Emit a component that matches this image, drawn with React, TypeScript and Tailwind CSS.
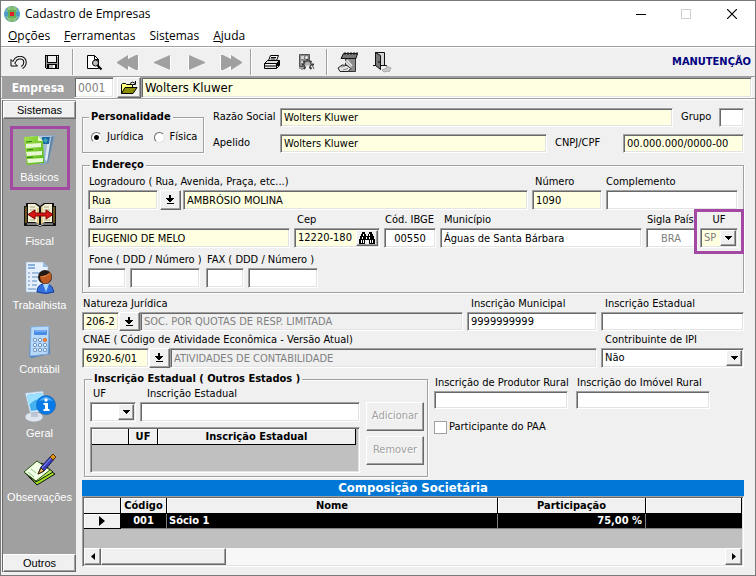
import React from 'react';

const sunken =
  'border border-t-[#a0a0a0] border-l-[#a0a0a0] border-b-white border-r-white shadow-[inset_1px_1px_0_#696969,inset_-1px_-1px_0_#e3e3e3]';
const raised =
  'bg-[#f0f0f0] border border-t-white border-l-white border-b-[#696969] border-r-[#696969] shadow-[inset_-1px_-1px_0_#a0a0a0]';
const etched = 'border border-[#a0a0a0] shadow-[1px_1px_0_#fff,inset_1px_1px_0_#fff]';

interface TextBoxProps {
  id: string;
  value?: string;
  className?: string;
  disabled?: boolean;
}

const TextBox = ({ id, value = '', className = 'bg-white', disabled }: TextBoxProps) => (
  <input
    id={id}
    type="text"
    defaultValue={value}
    disabled={disabled}
    aria-label={id}
    className={`min-w-0 rounded-none px-[3px] outline-none ${sunken} ${className}`}
  />
);

interface FieldProps {
  id: string;
  label: string;
  className?: string;
  labelClass?: string;
  children: React.ReactNode;
}

const Field = ({ id, label, className = '', labelClass = 'pl-px', children }: FieldProps) => (
  <div className={`flex min-w-0 flex-col ${className}`}>
    <label htmlFor={id} className={`h-4 leading-4 whitespace-nowrap ${labelClass}`}>{label}</label>
    <div className="flex">{children}</div>
  </div>
);

const PickButton = ({ label, className = '' }: { label: string; className?: string }) => (
  <button type="button" aria-label={label} className={`flex w-[21px] shrink-0 items-center justify-center ${raised} ${className}`}>
    <svg width="9" height="10" viewBox="0 0 9 10" shapeRendering="crispEdges">
      <path d="M3 0h2v3h3v1h-1v1h-1v1h-1v1h-2v-1h-1v-1h-1v-1h-1v-1h3zM1 8h7v1h-7z" fill="#000" />
    </svg>
  </button>
);

interface ComboProps {
  id: string;
  options: string[];
  className?: string;
  disabled?: boolean;
}

const Combo = ({ id, options, className = 'bg-white', disabled }: ComboProps) => (
  <div className={`relative flex h-5 ${sunken} ${className}`}>
    <select id={id} disabled={disabled} className="w-full min-w-0 appearance-none bg-transparent pr-4 pl-[3px] opacity-100 outline-none">
      {options.map(o => <option key={o}>{o}</option>)}
    </select>
    <span className={`pointer-events-none absolute top-px right-px bottom-px flex w-4 items-center justify-center ${raised}`}>
      <svg width="7" height="4" viewBox="0 0 7 4" shapeRendering="crispEdges">
        <path d="M0 0h7v1h-1v1h-1v1h-1v1h-1v-1h-1v-1h-1v-1h-1z" fill="#000" />
      </svg>
    </span>
  </div>
);

// Toolbar icons
const UndoIcon = () => (
  <svg width="17" height="13" viewBox="0 0 17 13" fill="none">
    <path d="M4 7q1-5 6-5.500 5 .5 5 5 0 3-3 5" stroke="#000" strokeWidth="3.400" />
    <path d="M4 7q1-5 6-5.500 5 .5 5 5 0 3-3 5" stroke="#f4f4f4" strokeWidth="1.400" />
    <path d="M1 3.500V10h6.500z" fill="#f4f4f4" stroke="#000" />
    <path d="M3 7l2-2" stroke="#f4f4f4" strokeWidth="1.500" />
  </svg>
);

const SaveIcon = () => (
  <svg width="14" height="14" viewBox="0 0 14 14" shapeRendering="crispEdges">
    <path d="M0 0h14v14H1v-1H0z" fill="#000" />
    <path d="M1 1h1v12H1zM12 2h1v11h-1z" fill="#9a9a9a" />
    <path d="M3 1h8v6H3z" fill="#f0f0f0" />
    <path d="M12 1h1v1h-1z" fill="#fff" />
    <path d="M2 8h10v1H2z" fill="#9a9a9a" />
    <path d="M4 10h6v3H4z" fill="#b8b8b8" />
    <path d="M8 10h2v3H8z" fill="#fff" />
  </svg>
);

const PreviewIcon = () => (
  <svg width="17" height="17" viewBox="0 0 17 17">
    <path d="M1.500 1.500h7l4 4v9h-11z" fill="#fff" stroke="#000" />
    <path d="M8.500 1.500v4h4" fill="none" stroke="#000" />
    <circle cx="9.500" cy="9" r="3" fill="#c0c0c0" stroke="#000" />
    <path d="M11.500 11.500l4 4" stroke="#000" strokeWidth="2" />
  </svg>
);

const ArrowIcon = ({ double, flip }: { double?: boolean; flip?: boolean }) => (
  <svg width={double ? 23 : 17} height="17" viewBox={double ? '0 0 23 17' : '0 0 17 17'} className={flip ? '-scale-x-100' : ''}>
    {double ? (
      <>
        <path d="M12 2v3l6-3h4v15l-6-4-3-1v4L1 9z" fill="#fff" />
        <path d="M11 1v4l8-4h2v15h-2l-8-4v4L0 9V8z" fill="#a0a0a0" />
      </>
    ) : (
      <>
        <path d="M17 2v15L1 10V9z" fill="#fff" />
        <path d="M16 1v15L0 9V8z" fill="#a0a0a0" />
      </>
    )}
  </svg>
);

const PrinterIcon = () => (
  <svg width="17" height="16" viewBox="0 0 17 16" stroke="#000">
    <path d="M4.500 6.500l2-5h8l-2 5z" fill="#fff" />
    <path d="M7 3.500h5M6.500 5h5" fill="none" />
    <path d="M.5 9.500l3-3h12v5l-3 3h-12z" fill="#ddd" />
    <path d="M.5 9.500h12v5M12.500 9.500l3-3M1 12h11" fill="none" />
    <path d="M2 10.500h9" stroke="#fff" />
    <path d="M14 8v4" strokeWidth="2" />
  </svg>
);

const GearIcon = () => (
  <svg width="17" height="18" viewBox="0 0 17 18">
    <path d="M1.500 1.500h10v12h-10z" fill="#8a8a8a" stroke="#555" />
    <path d="M3 3h3v3H3zM3 8h2v2H3z" fill="#d5d5d5" />
    <path d="M7 3h3v3H7z" fill="#fff" stroke="#444" strokeWidth=".5" />
    <path d="M9.500 6v11M4 11.500h12M5.500 8l8 8M13.500 8l-8 8" stroke="#3a3a3a" strokeWidth="2" />
    <circle cx="9.500" cy="11.500" r="3.500" fill="#b0b0b0" stroke="#444" />
    <path d="M8 12.500h3v5H8z" fill="#f0f0f0" />
    <path d="M2 13v3M4 13v4M14 12l2 4" stroke="#555" />
  </svg>
);

const NotepadIcon = () => (
  <svg width="22" height="21" viewBox="0 0 22 21">
    <path d="M8.500 5.500h10v14h-10z" fill="#8c8c8c" stroke="#333" />
    <path d="M6.500 1.500h14l-1.500 5H4z" fill="#777" stroke="#111" />
    <path d="M8 0v3M11 0v3M14 0v3M17 0v3M20 0v3" stroke="#222" />
    <path d="M10 8l5 6M8 9l6 7" stroke="#e8e8e8" strokeWidth="1.500" />
    <path d="M1 16l4-3 5 .5 4 3-3 3H3z" fill="#e4e4e4" stroke="#222" />
    <path d="M4 15l4-1M6 18l5-1.500" stroke="#888" />
  </svg>
);

const DoorIcon = () => (
  <svg width="20" height="22" viewBox="0 0 20 22">
    <path d="M3.500 1.500h9v13h-9z" fill="#d5d5d5" stroke="#111" />
    <path d="M3.500 1.500l5 3v14l-5-4z" fill="#777" stroke="#111" />
    <path d="M1 14.500h3M12 14.500h3" stroke="#111" />
    <path d="M7 10v2" stroke="#000" />
    <path d="M10 19l5-2-1-2 5 2-2 4-1-1-4 1z" fill="#ccc" stroke="#aaa" />
  </svg>
);

const FolderIcon = () => (
  <svg width="17" height="14" viewBox="0 0 17 14">
    <path d="M.5 12.500v-9l1-1h3l1 1h6v3" fill="#ffff7a" stroke="#000" />
    <path d="M.5 12.500l3.500-6h12l-4 6z" fill="#8c8c00" stroke="#000" />
    <path d="M9 2.500q3-3 5 0M14.500 0v3.500H12" fill="none" stroke="#000" />
  </svg>
);

const BinocularsIcon = () => (
  <svg width="16" height="13" viewBox="0 0 16 13" shapeRendering="crispEdges">
    <path d="M3 0h3v2h1v2h2V2h1V0h3v2h1v2h1v3h1v5h-6V8H6v4H0V7h1V4h1V2h1z" fill="#000" />
    <path d="M4 2h1v2H4zM3 5h1v2H3zM2 8h1v3H2zM4 8h1v3H4zM10 2h1v2h-1zM10 5h1v2h-1zM11 8h1v3h-1zM13 8h1v3h-1zM7 5h1v2H7z" fill="#fff" />
  </svg>
);

// Sidebar icons
const BasicosIcon = () => (
  <svg width="32" height="32" viewBox="0 0 32 32">
    <defs>
      <linearGradient id="folha" x1="0" y1="0" x2="1" y2="1">
        <stop offset="0" stopColor="#a5e34d" />
        <stop offset="1" stopColor="#4fb512" />
      </linearGradient>
      <linearGradient id="vidro" x1="0" y1="0" x2="1" y2="1">
        <stop offset="0" stopColor="#c2d6e8" />
        <stop offset="1" stopColor="#7d9dbd" />
      </linearGradient>
    </defs>
    <path d="M6 2l25-1-7 28-8 2z" fill="url(#vidro)" stroke="#7894ad" strokeWidth=".5" />
    <path d="M29 3l-6 25-2-3 3-20z" fill="#dce9f3" />
    <path d="M30 2l-6 26-1 1 4-26z" fill="#5f83a6" />
    <path d="M18 3h8l-1 7h-7z" fill="#1d67a5" />
    <path d="M21 4l3 2-2 3-3-2z" fill="#38a7b8" />
    <path d="M0 3l14-1 5 5 1 22-17 2z" fill="url(#folha)" />
    <path d="M14 2v5h5z" fill="#e4f8c8" />
    <path d="M2 10l15-1v4L2 14zM2 18l16-1v4L3 22zM3 25l16-1v4L4 29z" fill="#e9f8d4" />
    <path d="M2 8l6-.5M3 16l6-.5M3 23.500l6-.5" stroke="#22780c" />
  </svg>
);

const FiscalIcon = () => (
  <svg width="32" height="27" viewBox="0 0 32 27">
    <path d="M0 5h2V2h10l4 3 4-3h10v3h2v20H18l-2 1-2-1H0z" fill="#111" />
    <path d="M4 3h7l4 3v17l-4-2H4zM28 3h-7l-4 3v17l4-2h7z" fill="#f4eed2" />
    <path d="M2 6v16M30 6v16" stroke="#c89734" />
    <path d="M6 6h5M6 9h6M6 19h5M20 6h5M20 9h6M20 19h6" stroke="#aca58c" />
    <path d="M14 7v16M18 6v17" stroke="#c5ab52" />
    <path d="M4 13.500l7-4.500v3h11V9l7 4.500-7 4.500v-3H11v3z" fill="#d61616" stroke="#850000" />
    <path d="M3 23h10l3 2 3-2h10" stroke="#ddd" fill="none" />
  </svg>
);

const TrabalhistaIcon = () => (
  <svg width="32" height="32" viewBox="0 0 32 32">
    <path d="M2 0h17l5 5v25H2z" fill="#e5f0fc" stroke="#8cb1d9" strokeWidth=".5" />
    <path d="M19 0v5h5z" fill="#9abbdd" />
    <path d="M4 3h7M4 6h7" stroke="#236ec5" />
    <path d="M4 11h2M8 11h9M4 15h2M8 15h6M4 19h2M8 19h5M4 23h2M8 23h5M4 27h8" stroke="#5b8abf" />
    <path d="M13 30q0-7 6-8h5q5 2 6 8-8 3-17 0z" fill="#346fde" stroke="#153e99" />
    <path d="M19 22l3 8 3-8z" fill="#a6d5ff" />
    <circle cx="21" cy="15" r="7" fill="#231916" />
    <path d="M16 14q7 0 10-4 3 5 0 9-3 4-7 2-3-2-3-7z" fill="#bd5b22" />
    <path d="M18 15q5-1 7-3" stroke="#e68b43" fill="none" />
  </svg>
);

const ContabilIcon = () => (
  <svg width="32" height="32" viewBox="0 0 32 32">
    <path d="M7 1l18-1 1 28-19 4-2-2z" fill="#4c7fbf" />
    <path d="M7 1l18-1-1 28-18 2z" fill="#b9d9fa" stroke="#83b0df" />
    <rect x="10" y="4" width="13" height="5" rx="1" fill="#4a8be5" />
    <path d="M11 5h11" stroke="#9bcbff" />
    {[14, 19, 24].map(y => (
      <g key={y} fill="#e5f3ff" stroke="#6d95c4">
        <circle cx="11" cy={y} r="1.700" />
        <circle cx="16" cy={y} r="1.700" />
        <circle cx="21" cy={y} r="1.700" />
      </g>
    ))}
    <circle cx="21" cy="14" r="2" fill="#f17a32" />
  </svg>
);

const GeralIcon = () => (
  <svg width="32" height="32" viewBox="0 0 32 32">
    <ellipse cx="10" cy="27" rx="9" ry="5" fill="#dfe5ec" stroke="#8d9bab" strokeWidth=".5" />
    <path d="M7 20h7v7H7z" fill="#bdc7d3" />
    <path d="M1 3l18-2 4 20-17 2z" fill="#dce9f5" stroke="#8ca8c3" strokeWidth=".5" />
    <path d="M3 5l15-2 3 16-14 2z" fill="#43b0ef" />
    <path d="M3 5l15-2 1 5q-9 1-14 7z" fill="#9ae1ff" />
    <circle cx="22" cy="15" r="9.500" fill="#087be8" stroke="#0755b5" strokeWidth=".5" />
    <path d="M15 11q7-8 14 0-7-2-14 0z" fill="#4eabfa" />
    <circle cx="22" cy="10" r="1.700" fill="#fff" />
    <path d="M19.500 13H24v6h1.500v2h-6v-2H21v-4h-1.500z" fill="#fff" />
  </svg>
);

const ObservacoesIcon = () => (
  <svg width="32" height="32" viewBox="0 0 32 32">
    <path d="M4 22l18-8 9 6-18 11z" fill="#9ddd20" stroke="#111" />
    <path d="M1 19l17-10 11 9-17 10z" fill="#bdec55" stroke="#111" />
    <path d="M0 18L13 7l13 9-14 11z" fill="#f4ffe8" stroke="#265b12" />
    <path d="M4 18l6 5M7 15l5 4" stroke="#8bc57a" />
    <path d="M14 20l3-7L28 1l3 3-11 13z" fill="#3b40ba" stroke="#111454" />
    <path d="M18 14L28 3" stroke="#9197ff" />
    <path d="M26 3l3-3 3 3-3 3z" fill="#d99318" stroke="#5b3100" />
    <path d="M14 20l3-6 3 3z" fill="#eec166" stroke="#3d2b00" />
  </svg>
);

const sidebarItems = [
  { label: 'Básicos', icon: <BasicosIcon />, active: true },
  { label: 'Fiscal', icon: <FiscalIcon /> },
  { label: 'Trabalhista', icon: <TrabalhistaIcon /> },
  { label: 'Contábil', icon: <ContabilIcon /> },
  { label: 'Geral', icon: <GeralIcon /> },
  { label: 'Observações', icon: <ObservacoesIcon /> },
];

const ToolButton = ({ label, children }: { label: string; children: React.ReactNode }) => (
  <button type="button" aria-label={label} className="flex h-7 w-[34px] items-center justify-center">{children}</button>
);

const Separator = () => <span className="mx-[3px] h-[26px] w-0.5 border-r border-l border-r-white border-l-[#a0a0a0]" />;

const TitleBar = () => (
  <header className="flex h-[25px] items-center bg-white pl-[3px] font-['Open_Sans','Noto_Sans',sans-serif] text-xs">
    <svg width="16" height="16" viewBox="0 0 16 16">
      <circle cx="8" cy="8" r="8" fill="#4b9cc4" />
      <path d="M3 2l5-2 5 2v3H3zM3 11h10v3l-5 2-5-2z" fill="#85bd6c" />
      <path d="M5 0v16M11 0v16M0 5h16M0 11h16" stroke="#a9d2b0" strokeWidth=".7" />
      <rect x="4" y="4" width="8" height="8" fill="#68ad58" />
      <rect x="6" y="6" width="4" height="4" fill="#e2202b" />
    </svg>
    <h1 className="ml-[5px] flex-1">Cadastro de Empresas</h1>
    <button type="button" aria-label="Minimizar" className="flex w-[45px] justify-center">
      <svg width="10" height="10" viewBox="0 0 10 10"><path d="M0 5.500h10" stroke="#000" /></svg>
    </button>
    <button type="button" aria-label="Maximizar" disabled className="flex w-[45px] justify-center">
      <svg width="10" height="10" viewBox="0 0 10 10"><path d="M.5.5h9v9h-9z" fill="none" stroke="#ccc" /></svg>
    </button>
    <button type="button" aria-label="Fechar" className="flex w-[47px] justify-center">
      <svg width="10" height="10" viewBox="0 0 10 10"><path d="M0 0l10 10M10 0L0 10" stroke="#000" strokeWidth="1.200" /></svg>
    </button>
  </header>
);

const MenuBar = () => (
  <nav className="flex h-[21px] items-center gap-3.5 border-b border-[#a0a0a0] bg-white pl-[7px] font-['Open_Sans','Noto_Sans',sans-serif] text-xs">
    <button type="button"><u>O</u>pções</button>
    <button type="button"><u>F</u>erramentas</button>
    <button type="button">Sis<u>t</u>emas</button>
    <button type="button"><u>A</u>juda</button>
  </nav>
);

const Toolbar = () => (
  <div className="flex h-[30px] items-center border-t border-b border-t-white border-b-[#a0a0a0]">
    <ToolButton label="Desfazer"><UndoIcon /></ToolButton>
    <ToolButton label="Salvar"><SaveIcon /></ToolButton>
    <Separator />
    <ToolButton label="Visualizar"><PreviewIcon /></ToolButton>
    <ToolButton label="Primeiro"><ArrowIcon double /></ToolButton>
    <ToolButton label="Anterior"><ArrowIcon /></ToolButton>
    <ToolButton label="Próximo"><ArrowIcon flip /></ToolButton>
    <ToolButton label="Último"><ArrowIcon double flip /></ToolButton>
    <Separator />
    <ToolButton label="Imprimir"><PrinterIcon /></ToolButton>
    <ToolButton label="Configurar"><GearIcon /></ToolButton>
    <Separator />
    <ToolButton label="Anotações"><NotepadIcon /></ToolButton>
    <ToolButton label="Sair"><DoorIcon /></ToolButton>
    <strong className="ml-auto pr-1 text-[11px] text-[#000080]">MANUTENÇÃO</strong>
  </div>
);

const Sidebar = () => (
  <aside className="flex w-[74px] shrink-0 flex-col border-l border-[#696969] bg-[#a0a0a0] font-['Liberation_Sans',Arial,sans-serif] text-[11px]">
    <button type="button" className={`mt-px h-[18px] ${raised}`}>Sistemas</button>
    <ul className="mt-[7px] flex flex-1 flex-col">
      {sidebarItems.map(item => (
        <li key={item.label} className="flex justify-center">
          <button
            type="button"
            className={`flex h-16 flex-col items-center border-[3px] pt-[5px] text-white ${item.active ? 'w-[60px] border-[#a349a4]' : 'w-full border-transparent'}`}
          >
            <span className="flex h-8 items-center">{item.icon}</span>
            <span className="mt-[3px] leading-4">{item.label}</span>
          </button>
        </li>
      ))}
    </ul>
    <button type="button" className={`h-[18px] ${raised}`}>Outros</button>
  </aside>
);

const Endereco = () => (
  <fieldset className={`mt-[5px] min-w-0 px-[5px] pb-1 ${etched}`}>
    <legend className="ml-0.5 bg-[#f0f0f0] px-0.5 leading-[14px] font-bold">Endereço</legend>
    <div className="flex gap-1 pt-0.5">
      <Field id="tipoLogradouro" label="Logradouro ( Rua, Avenida, Praça, etc...)" className="flex-1">
        <TextBox id="tipoLogradouro" value="Rua" className="h-5 w-[70px] bg-[#ffffe1]" />
        <PickButton label="Escolher logradouro" className="mx-0.5" />
        <TextBox id="logradouro" value="AMBRÓSIO MOLINA" className="h-5 flex-1 bg-[#ffffe1]" />
      </Field>
      <Field id="numero" label="Número" labelClass="pl-[3px]" className="w-[70px]">
        <TextBox id="numero" value="1090" className="h-5 w-full bg-[#ffffe1]" />
      </Field>
      <Field id="complemento" label="Complemento" labelClass="" className="w-[132px]">
        <TextBox id="complemento" className="h-5 w-full bg-white" />
      </Field>
    </div>
    <div className="flex gap-1 pt-0.5">
      <Field id="bairro" label="Bairro" className="flex-1">
        <TextBox id="bairro" value="EUGENIO DE MELO" className="h-5 w-full bg-[#ffffe1]" />
      </Field>
      <Field id="cep" label="Cep" labelClass="pl-[3px]" className="w-[86px]">
        <div className={`flex h-5 w-full bg-[#ffffe1] p-px ${sunken}`}>
          <input id="cep" type="text" defaultValue="12220-180" className="min-w-0 flex-1 pl-0.5 outline-none" />
          <button type="button" aria-label="Buscar CEP" className={`flex w-[22px] items-center justify-center ${raised}`}>
            <BinocularsIcon />
          </button>
        </div>
      </Field>
      <Field id="ibge" label="Cód. IBGE" className="w-[52px]">
        <TextBox id="ibge" value="00550" className="h-5 w-full bg-white text-center" />
      </Field>
      <Field id="municipio" label="Município" labelClass="pl-1" className="flex-1">
        <TextBox id="municipio" value="Águas de Santa Bárbara" className="h-5 w-full bg-white" />
      </Field>
      <Field id="pais" label="Sigla País" className="w-[50px]">
        <TextBox id="pais" value="BRA" disabled className="h-5 w-full bg-white text-center text-[#808080]" />
      </Field>
      <div className="relative">
        <Field id="uf" label="UF" labelClass="text-center" className="w-[38px]">
          <Combo id="uf" options={['SP']} disabled className="w-full bg-[#ffffe1] text-[#808080]" />
        </Field>
        <span className="pointer-events-none absolute -inset-x-1.5 -top-[3px] -bottom-1.5 border-[3px] border-[#a349a4]" />
      </div>
    </div>
    <div className="flex gap-1.5 pt-1">
      <Field id="foneDdd" label="Fone ( DDD / Número )" className="w-[112px]">
        <TextBox id="foneDdd" className="mr-1 h-5 w-[38px] bg-white" />
        <TextBox id="fone" className="h-5 w-[70px] bg-white" />
      </Field>
      <Field id="faxDdd" label="FAX ( DDD / Número )" className="w-[112px]">
        <TextBox id="faxDdd" className="mr-1 h-5 w-[38px] bg-white" />
        <TextBox id="fax" className="h-5 w-[70px] bg-white" />
      </Field>
    </div>
  </fieldset>
);

const headCell = 'border-r border-b border-black bg-[#f0f0f0] p-0 shadow-[inset_1px_1px_0_#fff]';

const InscricaoOutros = () => (
  <fieldset className={`ml-0.5 flex-1 pr-[3px] pb-[3px] pl-[5px] ${etched}`}>
    <legend className="ml-0.5 bg-[#f0f0f0] px-0.5 leading-[14px] font-bold">Inscrição Estadual ( Outros Estados )</legend>
    <div className="flex gap-1.5">
      <div className="flex flex-1 flex-col gap-[5px]">
        <div className="flex gap-1">
          <Field id="ufOutros" label="UF" labelClass="pl-[3px]" className="w-[46px]">
            <Combo id="ufOutros" options={['']} className="w-full bg-white" />
          </Field>
          <Field id="ieOutros" label="Inscrição Estadual" labelClass="pl-[7px]" className="flex-1">
            <TextBox id="ieOutros" className="h-5 w-full bg-white" />
          </Field>
        </div>
        <div className={`h-[46px] bg-[#c0c0c0] p-px pr-[3px] ${sunken}`}>
          <table className="w-full table-fixed border-separate border-spacing-0 leading-[15px]">
            <thead>
              <tr>
                <th className={`w-[37px] ${headCell}`} />
                <th className={`w-[29px] ${headCell}`}>UF</th>
                <th className={headCell}>Inscrição Estadual</th>
              </tr>
            </thead>
          </table>
        </div>
      </div>
      <div className="flex w-[58px] flex-col gap-[5px] pt-4">
        <button type="button" disabled className={`h-[29px] text-[#a0a0a0] [text-shadow:1px_1px_0_#fff] ${raised}`}>Adicionar</button>
        <button type="button" disabled className={`h-[29px] text-[#a0a0a0] [text-shadow:1px_1px_0_#fff] ${raised}`}>Remover</button>
      </div>
    </div>
  </fieldset>
);

const Composicao = () => (
  <section className="mt-[3px]">
    <h2 className="h-4 bg-[#0078d7] text-center text-[13px] leading-4 font-bold text-white">Composição Societária</h2>
    <div className={`bg-[#c0c0c0] p-px ${sunken}`}>
      <div className="h-[50px]">
        <table className="w-full table-fixed border-separate border-spacing-0 leading-[15px] font-bold">
          <thead>
            <tr>
              <th className={`w-[37px] ${headCell}`} />
              <th className={`w-[46px] ${headCell}`}>Código</th>
              <th className={headCell}>Nome</th>
              <th className={`w-[148px] ${headCell}`}>Participação</th>
              <th className={`w-[96px] ${headCell}`} />
            </tr>
          </thead>
          <tbody>
            <tr className="bg-black leading-[14px] text-white">
              <td className={headCell}>
                <svg width="6" height="10" viewBox="0 0 6 10" className="mx-auto"><path d="M0 0v10l6-5z" fill="#000" /></svg>
              </td>
              <td className="border-r border-b border-[#808080] p-0 text-center">001</td>
              <td className="border-r border-b border-[#808080] p-0 pl-0.5">Sócio 1</td>
              <td className="border-r border-b border-[#808080] p-0 pr-[3px] text-right">75,00 %</td>
              <td className="border-b border-[#808080] p-0" />
            </tr>
          </tbody>
        </table>
      </div>
      <div className="flex h-[17px] bg-[#f7f7f7]">
        <button type="button" aria-label="Rolar à esquerda" className={`flex w-[17px] items-center justify-center ${raised}`}>
          <svg width="4" height="7" viewBox="0 0 4 7"><path d="M4 0v7L0 3.500z" fill="#000" /></svg>
        </button>
        <div className="flex-1"><div className={`h-full w-1/5 ${raised}`} /></div>
        <button type="button" aria-label="Rolar à direita" className={`flex w-[17px] items-center justify-center ${raised}`}>
          <svg width="4" height="7" viewBox="0 0 4 7"><path d="M0 0v7l4-3.500z" fill="#000" /></svg>
        </button>
      </div>
    </div>
  </section>
);

export default function App() {
  return (
    <div className="flex min-h-screen flex-col border border-[#7a7a7a] bg-[#f0f0f0] font-['DejaVu_Sans_Condensed','DejaVu_Sans',sans-serif] text-[11px] text-black">
      <TitleBar />
      <MenuBar />
      <Toolbar />

      <div className="flex h-[22px] border-b border-[#a0a0a0] pl-px pr-[3px] text-xs">
        <label htmlFor="empresa" className="flex w-[72px] items-center justify-center bg-[#a0a0a0] font-bold text-white">Empresa</label>
        <TextBox id="empresa" value="0001" className="w-10 bg-white text-[#808080]" />
        <button type="button" aria-label="Abrir empresa" className={`ml-[3px] flex w-6 items-center justify-center ${raised}`}>
          <FolderIcon />
        </button>
        <TextBox id="nomeEmpresa" value="Wolters Kluwer" className="flex-1 bg-[#ffffe1] text-[13px]" />
      </div>

      <div className="flex flex-1 border-t border-white pb-[3px] pl-px">
        <Sidebar />
        <main className="min-w-0 flex-1 pt-2 pr-[11px] pl-1.5">
          <div className="flex gap-[9px]">
            <fieldset className={`mt-0.5 w-[122px] shrink-0 ${etched}`}>
              <legend className="ml-1.5 bg-[#f0f0f0] px-0.5 leading-[14px] font-bold">Personalidade</legend>
              <div className="flex items-center gap-2.5 pt-[5px] pl-2">
                {['Jurídica', 'Física'].map((tipo, i) => (
                  <label key={tipo} className="flex items-center gap-[5px]">
                    <input
                      type="radio"
                      name="personalidade"
                      defaultChecked={i === 0}
                      className="size-[11px] appearance-none rounded-full border border-t-[#696969] border-r-[#e3e3e3] border-b-[#e3e3e3] border-l-[#696969] bg-white checked:bg-[radial-gradient(circle,#000_2px,#fff_3px)]"
                    />
                    {tipo}
                  </label>
                ))}
              </div>
            </fieldset>
            <div className="flex min-w-0 flex-1 flex-col gap-[7px]">
              <div className="flex items-center">
                <label htmlFor="razao" className="w-[67px]">Razão Social</label>
                <TextBox id="razao" value="Wolters Kluwer" className="h-[19px] flex-1 bg-[#ffffe1]" />
                <label htmlFor="grupo" className="w-[46px] pl-2">Grupo</label>
                <TextBox id="grupo" className="h-[19px] w-[25px] bg-white" />
              </div>
              <div className="flex items-center">
                <label htmlFor="apelido" className="w-[67px]">Apelido</label>
                <TextBox id="apelido" value="Wolters Kluwer" className="h-[19px] flex-1 bg-[#ffffe1]" />
                <label htmlFor="cnpj" className="w-[76px] pl-2">CNPJ/CPF</label>
                <TextBox id="cnpj" value="00.000.000/0000-00" className="h-[19px] w-[121px] bg-[#ffffe1]" />
              </div>
            </div>
          </div>

          <Endereco />

          <div className="mt-[3px] flex gap-1">
            <Field id="natureza" label="Natureza Jurídica" className="flex-1">
              <TextBox id="natureza" value="206-2" className="h-[19px] w-[37px] bg-[#ffffe1]" />
              <PickButton label="Escolher natureza" />
              <TextBox id="naturezaNome" value="SOC. POR QUOTAS DE RESP. LIMITADA" disabled className="h-[19px] flex-1 bg-[#f0f0f0] text-[#808080]" />
            </Field>
            <Field id="inscMunicipal" label="Inscrição Municipal" labelClass="pl-1" className="w-[130px]">
              <TextBox id="inscMunicipal" value="9999999999" className="h-[19px] w-full bg-white" />
            </Field>
            <Field id="inscEstadual" label="Inscrição Estadual" labelClass="pl-1" className="w-[143px]">
              <TextBox id="inscEstadual" className="h-[19px] w-full bg-white" />
            </Field>
          </div>
          <div className="mt-px flex gap-1">
            <Field id="cnae" label="CNAE ( Código de Atividade Econômica - Versão Atual)" className="flex-1">
              <TextBox id="cnae" value="6920-6/01" className="h-5 w-[67px] bg-[#ffffe1]" />
              <PickButton label="Escolher CNAE" />
              <TextBox id="cnaeNome" value="ATIVIDADES DE CONTABILIDADE" disabled className="h-5 flex-1 bg-[#f0f0f0] text-[#808080]" />
            </Field>
            <Field id="ipi" label="Contribuinte de IPI" labelClass="pl-1" className="w-[143px]">
              <Combo id="ipi" options={['Não', 'Sim']} className="w-full bg-white" />
            </Field>
          </div>

          <div className="mt-1 flex gap-1.5">
            <InscricaoOutros />
            <div className="w-[310px] pt-[3px]">
              <div className="flex gap-2">
                <Field id="produtor" label="Inscrição de Produtor Rural" className="w-[134px]">
                  <TextBox id="produtor" className="h-[18px] w-full bg-white" />
                </Field>
                <Field id="imovel" label="Inscrição do Imóvel Rural" className="w-[134px]">
                  <TextBox id="imovel" className="h-[18px] w-full bg-white" />
                </Field>
              </div>
              <label className="mt-2.5 flex items-center gap-0.5">
                <input type="checkbox" className="size-[13px] appearance-none border border-[#a0a0a0] bg-white checked:bg-black" />
                Participante do PAA
              </label>
            </div>
          </div>

          <Composicao />
        </main>
      </div>
    </div>
  );
}
